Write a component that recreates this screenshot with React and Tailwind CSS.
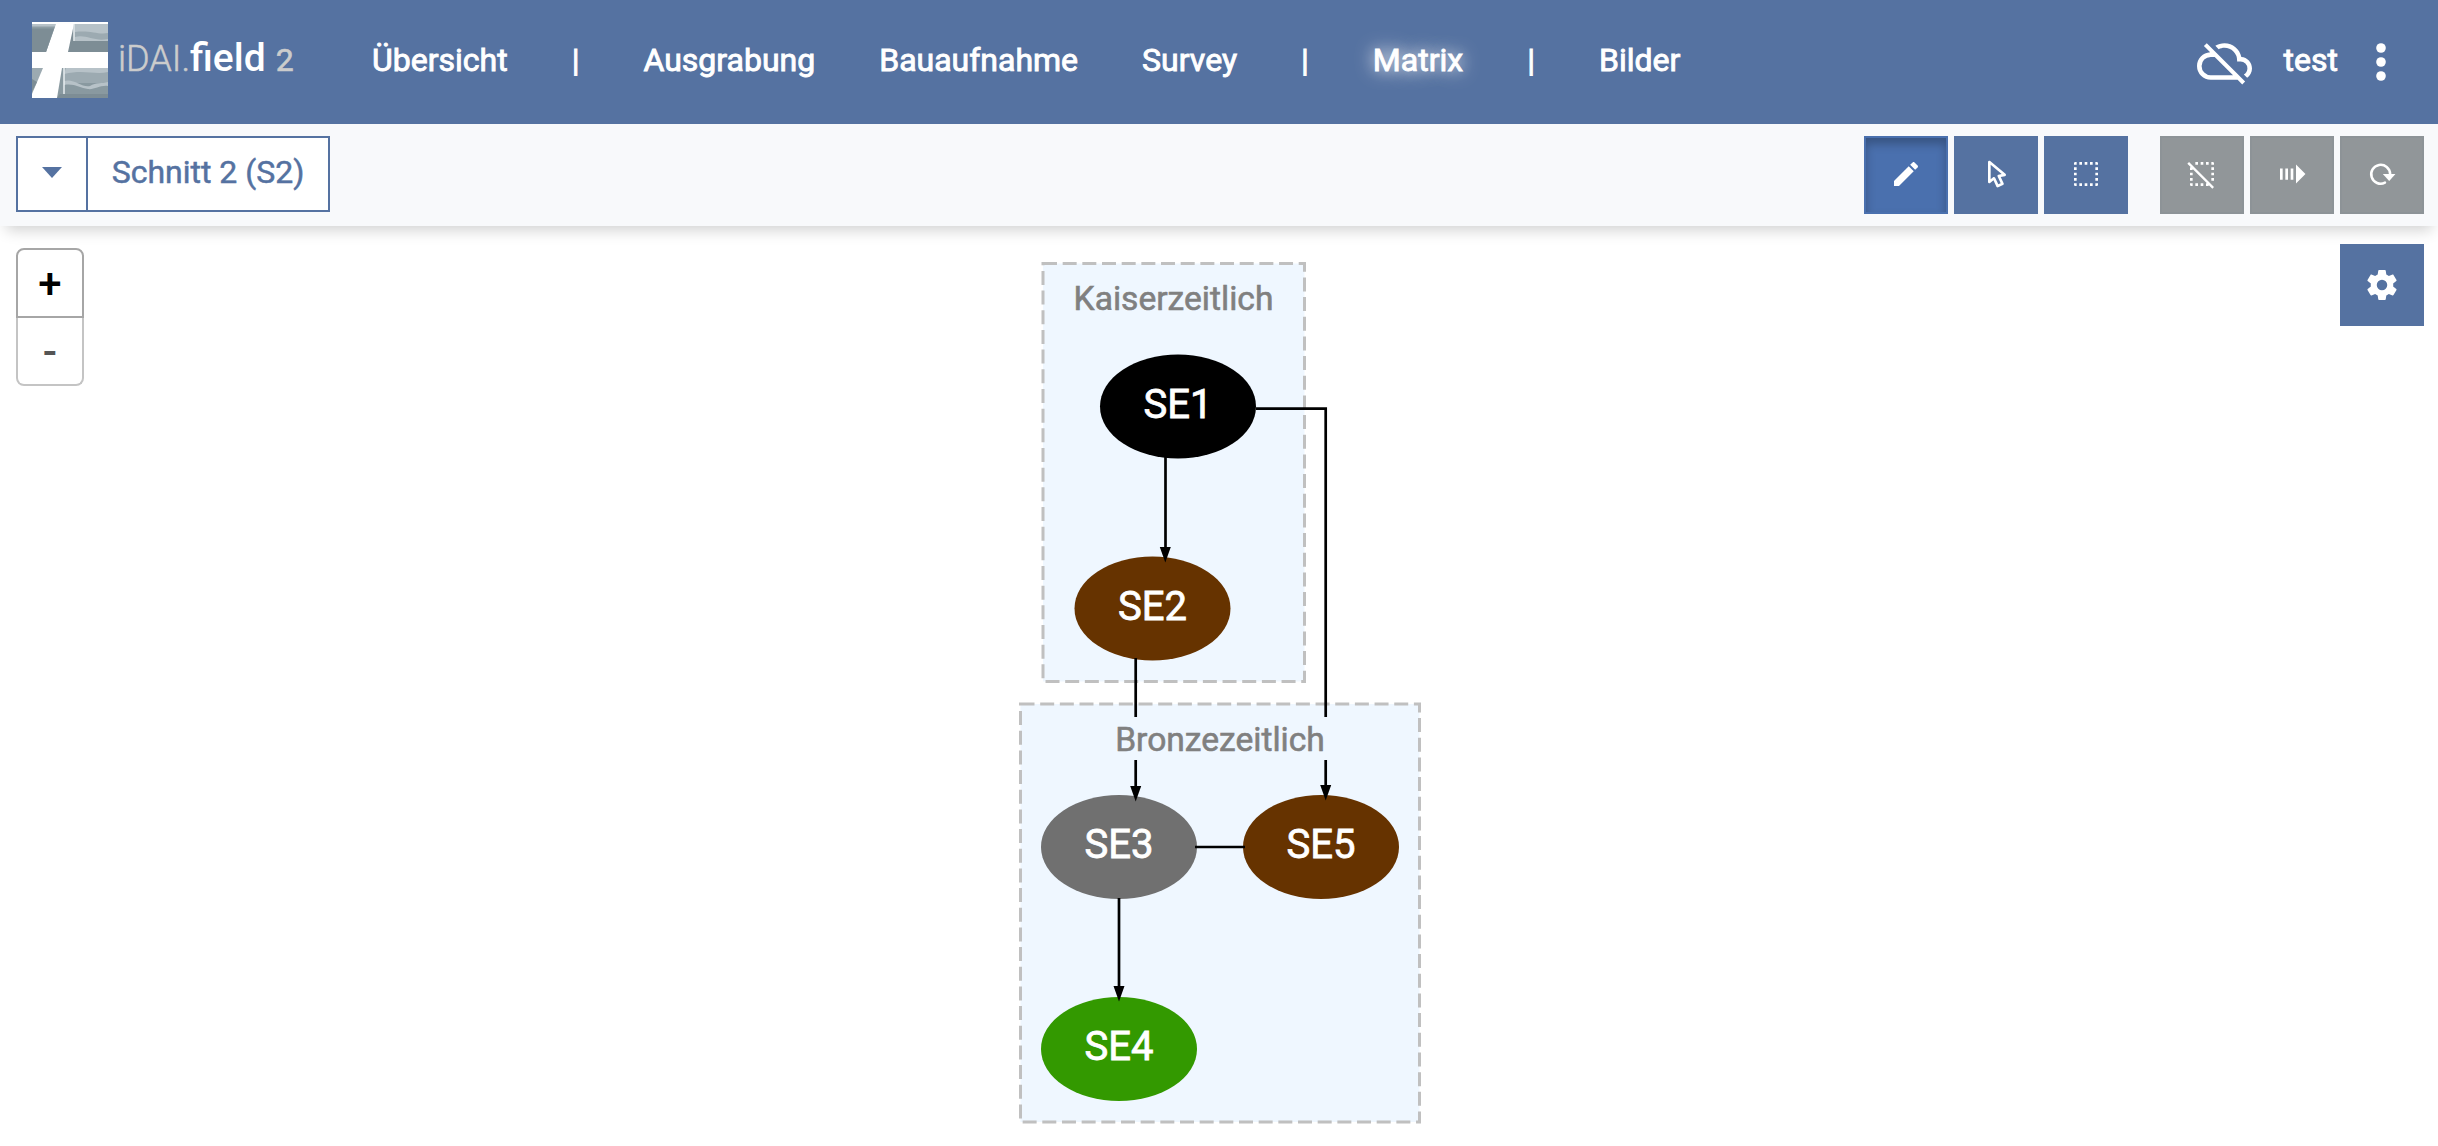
const ICONS = {
  pencil:
    'M20.71,7.04C21.1,6.65 21.1,6 20.71,5.63L18.37,3.29C18,2.9 17.35,2.9 16.96,3.29L15.12,5.12L18.87,8.87M3,17.25V21H6.75L17.81,9.93L14.06,6.18L3,17.25Z',
  cursor:
    'M10.07,14.27C10.57,14.03 11.16,14.25 11.4,14.75L13.7,19.74L15.5,18.89L13.19,13.91C12.95,13.41 13.17,12.81 13.67,12.58L13.95,12.5L16.25,12.05L8,5.12V15.9L9.82,14.43L10.07,14.27M13.64,21.97C13.14,22.21 12.54,22 12.31,21.5L10.13,16.76L7.62,18.78C7.45,18.92 7.24,19 7,19A1,1 0 0,1 6,18V3A1,1 0 0,1 7,2C7.24,2 7.47,2.09 7.64,2.23L7.65,2.22L19.14,11.86C19.57,12.22 19.62,12.85 19.27,13.27C19.12,13.45 18.91,13.57 18.7,13.61L15.54,14.23L17.74,18.96C18,19.46 17.76,20.05 17.26,20.28L13.64,21.97Z',
  select:
    'M4,3H5V5H3V4A1,1 0 0,1 4,3M20,3A1,1 0 0,1 21,4V5H19V3H20M15,5V3H17V5H15M11,5V3H13V5H11M7,5V3H9V5H7M21,20A1,1 0 0,1 20,21H19V19H21V20M15,21V19H17V21H15M11,21V19H13V21H11M7,21V19H9V21H7M4,21A1,1 0 0,1 3,20V19H5V21H4M3,15H5V17H3V15M21,15V17H19V15H21M3,11H5V13H3V11M21,11V13H19V11H21M3,7H5V9H3V7M21,7V9H19V7H21Z',
  selectOff:
    'M1,4.27L2.28,3L21,21.72L19.73,23L17,20.27V21H15V19H15.73L5,8.27V9H3V7H3.73L1,4.27M20,3A1,1 0 0,1 21,4V5H19V3H20M15,5V3H17V5H15M11,5V3H13V5H11M7,5V3H9V5H7M11,21V19H13V21H11M7,21V19H9V21H7M4,21A1,1 0 0,1 3,20V19H5V21H4M3,15H5V17H3V15M21,15V17H19V15H21M3,11H5V13H3V11M21,11V13H19V11H21M21,7V9H19V7H21Z',
  forward: 'M3,16.3V7.9H5V16.3H3M7,16.3V7.9H9V16.3H7M11,16.3V7.9H13V16.3H11M15,19.2V4.8L22.1,12L15,19.2Z',
  cloudOff:
    'M19.35,10.04C18.67,6.59 15.64,4 12,4C10.5,4 9.15,4.43 8,5.17L9.46,6.63C10.21,6.23 11.08,6 12,6A5.5,5.5 0 0,1 17.5,11.5V12H19A3,3 0 0,1 22,15C22,16.13 21.36,17.11 20.44,17.62L21.89,19.07C23.16,18.16 24,16.68 24,15C24,12.36 21.95,10.22 19.35,10.04M3,5.27L5.75,8C2.56,8.15 0,10.77 0,14A6,6 0 0,0 6,20H17.73L19.73,22L21,20.73L4.27,4M7.73,10L15.73,18H6A4,4 0 0,1 2,14A4,4 0 0,1 6,10H7.73Z',
  cog: 'M12,15.5A3.5,3.5 0 0,1 8.5,12A3.5,3.5 0 0,1 12,8.5A3.5,3.5 0 0,1 15.5,12A3.5,3.5 0 0,1 12,15.5M19.43,12.97C19.47,12.65 19.5,12.33 19.5,12C19.5,11.67 19.47,11.34 19.43,11L21.54,9.37C21.73,9.22 21.78,8.95 21.66,8.73L19.66,5.27C19.54,5.05 19.27,4.96 19.05,5.05L16.56,6.05C16.04,5.66 15.5,5.32 14.87,5.07L14.5,2.42C14.46,2.18 14.25,2 14,2H10C9.75,2 9.54,2.18 9.5,2.42L9.13,5.07C8.5,5.32 7.96,5.66 7.44,6.05L4.95,5.05C4.73,4.96 4.46,5.05 4.34,5.27L2.34,8.73C2.21,8.95 2.27,9.22 2.46,9.37L4.57,11C4.53,11.34 4.5,11.67 4.5,12C4.5,12.33 4.53,12.65 4.57,12.97L2.46,14.63C2.27,14.78 2.21,15.05 2.34,15.27L4.34,18.73C4.46,18.95 4.73,19.03 4.95,18.95L7.44,17.94C7.96,18.34 8.5,18.68 9.13,18.93L9.5,21.58C9.54,21.82 9.75,22 10,22H14C14.25,22 14.46,21.82 14.5,21.58L14.87,18.93C15.5,18.67 16.04,18.34 16.56,17.94L19.05,18.95C19.27,19.03 19.54,18.95 19.66,18.73L21.66,15.27C21.78,15.05 21.73,14.78 21.54,14.63L19.43,12.97Z',
}

function Icon({ name, className }) {
  if (name === 'reload') {
    return (
      <svg viewBox="0 0 24 24" fill="currentColor" className={className}>
        <path
          d="M18.1,12A7.1,7.1 0 1,0 14.2,18.5"
          fill="none"
          stroke="currentColor"
          strokeWidth="1.9"
          strokeLinecap="round"
        />
        <path d="M12.6,12H22.1L17.4,17.3Z" />
      </svg>
    )
  }
  return (
    <svg viewBox="0 0 24 24" fill="currentColor" className={className}>
      <path d={ICONS[name]} />
    </svg>
  )
}

function Logo() {
  return (
    <svg viewBox="0 0 76 76" className="-mt-1 size-[76px] shrink-0">
      <rect width="76" height="76" fill="#fff" />
      <path d="M0,2H24L14,30H0Z" fill="#b7c2c8" />
      <path d="M0,4.5H23L14,30H0Z" fill="#8d9ca3" />
      <path d="M0,6.5H22L14,30H0Z" fill="#7d8d95" />
      <path d="M42,2H76V30H36Z" fill="#7d8d95" />
      <path d="M42,2H76V19H42Z" fill="#9caab1" />
      <path d="M43,2H76V11C66,13 58,8 43,10Z" fill="#b7c2c8" />
      <path d="M43,15C54,12 62,20 76,17V19H43Z" fill="#b7c2c8" />
      <path d="M42,2V19" stroke="#e9eef0" strokeWidth="1.5" />
      <path d="M0,46H11L0,72Z" fill="#9caab1" />
      <path d="M0,57L5,60L0,70Z" fill="#7d8d95" />
      <path d="M30,46H76V76H25Z" fill="#8999a0" />
      <path d="M32,46H76V61H32Z" fill="#9caab1" />
      <path d="M34,46H76V50C62,53 52,47 32,52Z" fill="#b7c2c8" />
      <path d="M32,59C42,56 50,66 58,64C64,60 70,62 76,60V64C68,63 62,68 56,67C48,66 42,61 32,63Z" fill="#b7c2c8" />
      <path d="M28,72H76V76H25Z" fill="#7d8d95" />
      <path d="M32,46V72" stroke="#e9eef0" strokeWidth="1.5" />
    </svg>
  )
}

function NavItem({ children, className = '' }) {
  return <a className={`block px-8 ${className}`}>{children}</a>
}

function Header() {
  return (
    <header className="relative z-10 flex h-[124px] shrink-0 items-center bg-[#5572a1] text-[32px] leading-[48px] text-white">
      <div className="flex w-[340px] shrink-0 items-center pl-8">
        <Logo />
        <div className="-mt-[6px] ml-[10px] flex items-baseline whitespace-nowrap text-[#ccc]">
          <span className="text-[36px] font-light [-webkit-text-stroke:0.5px_#ccc]">iDAI.</span>
          <span className="text-[39px] font-medium text-white">field</span>
          <span className="ml-[10px] text-[32px] [-webkit-text-stroke:0.6px_#ccc]">2</span>
        </div>
      </div>
      <nav className="-mt-[4px] flex items-center [-webkit-text-stroke:0.9px_#fff]">
        <NavItem>Übersicht</NavItem>
        <NavItem>|</NavItem>
        <NavItem>Ausgrabung</NavItem>
        <NavItem>Bauaufnahme</NavItem>
        <NavItem>Survey</NavItem>
        <NavItem>|</NavItem>
        <NavItem className="[text-shadow:0_0_20px_#fff,0_0_14px_rgba(255,255,255,0.4)]">Matrix</NavItem>
        <NavItem>|</NavItem>
        <NavItem>Bilder</NavItem>
      </nav>
      <div className="mr-[52px] ml-auto flex items-center">
        <Icon name="cloudOff" className="-mt-[2px] size-[55px]" />
        <span className="-mt-[4px] ml-8 [-webkit-text-stroke:0.9px_#fff]">test</span>
        <svg viewBox="0 0 10 38" fill="currentColor" className="-mt-[1px] ml-[38px] h-[38px] w-[10px]">
          <circle cx="5" cy="5" r="4.8" />
          <circle cx="5" cy="19" r="4.8" />
          <circle cx="5" cy="33" r="4.8" />
        </svg>
      </div>
    </header>
  )
}

function ToolButton({ icon, active, disabled }) {
  const tone = active
    ? 'border-[#4a70ae] bg-[#4a70ae] shadow-[inset_0_6px_10px_rgba(0,0,0,0.25)]'
    : disabled
      ? 'border-[#8d9397] bg-[#919699]'
      : 'border-[#5572a1] bg-[#5572a1]'
  return (
    <button className={`flex h-[78px] w-[84px] items-center justify-center border-2 pb-[2px] text-white ${tone}`}>
      <Icon name={icon} className="size-8" />
    </button>
  )
}

function Toolbar() {
  return (
    <div className="relative flex h-[102px] shrink-0 items-start justify-between bg-[#f8f9fb] px-4 pt-3 pr-[14px] shadow-[0_10px_14px_-6px_rgba(0,0,0,0.19)]">
      <div className="flex h-[76px] w-[314px] border-2 border-[#5572a1] bg-white text-[32px] whitespace-nowrap text-[#5572a1] [-webkit-text-stroke:0.5px_#5572a1]">
        <div className="flex w-[68px] shrink-0 items-center justify-center pb-[4px]">
          <svg viewBox="0 0 20 11" fill="currentColor" className="h-[11px] w-5">
            <path d="M0,0H20L10,11Z" />
          </svg>
        </div>
        <div className="flex flex-1 items-center justify-center border-l-2 border-[#5572a1] pb-[4px]">Schnitt 2 (S2)</div>
      </div>
      <div className="flex gap-[6px]">
        <ToolButton icon="pencil" active />
        <ToolButton icon="cursor" />
        <ToolButton icon="select" />
        <div className="w-5" />
        <ToolButton icon="selectOff" disabled />
        <ToolButton icon="forward" disabled />
        <ToolButton icon="reload" disabled />
      </div>
    </div>
  )
}

const GROUPS = [
  { label: 'Kaiserzeitlich', x: 1043, y: 263.5, w: 261.5, h: 418, tx: 1173.5, ty: 310 },
  { label: 'Bronzezeitlich', x: 1020.5, y: 704, w: 399, h: 418, tx: 1220, ty: 751 },
]

const NODES = [
  { label: 'SE1', cx: 1178, cy: 406.5, fill: '#000000' },
  { label: 'SE2', cx: 1152.5, cy: 608.5, fill: '#663300' },
  { label: 'SE3', cx: 1119, cy: 847, fill: '#707070' },
  { label: 'SE5', cx: 1321, cy: 847, fill: '#663300' },
  { label: 'SE4', cx: 1119, cy: 1049, fill: '#339900' },
]

const EDGES = [
  'M1165.5,457V548',
  'M1256,408.7H1325.7V717M1325.7,760V786',
  'M1135.7,658V717M1135.7,760V786',
  'M1195,847H1245',
  'M1119,898V988',
]

const ARROWS = [
  [1165.3, 562],
  [1325.7, 800],
  [1135.7, 801],
  [1119, 1001],
]

function Matrix() {
  return (
    <svg viewBox="0 226 2438 920" className="absolute inset-0 h-full w-full">
      {GROUPS.map((g) => (
        <rect
          key={g.label}
          x={g.x}
          y={g.y}
          width={g.w}
          height={g.h}
          fill="#eff7ff"
          stroke="#c0c0c0"
          strokeWidth="3"
          strokeDasharray="14 5.67"
        />
      ))}
      {NODES.map((n) => (
        <ellipse key={n.label} cx={n.cx} cy={n.cy} rx="78" ry="52" fill={n.fill} />
      ))}
      {EDGES.map((d) => (
        <path key={d} d={d} fill="none" stroke="#000" strokeWidth="2.7" />
      ))}
      {ARROWS.map(([x, y]) => (
        <path key={`${x}-${y}`} d={`M${x - 5.5},${y - 15}h11l-5.5,15.5Z`} />
      ))}
      {GROUPS.map((g) => (
        <text
          key={g.label}
          x={g.tx}
          y={g.ty}
          textAnchor="middle"
          fill="#808080"
          stroke="#808080"
          strokeWidth="0.6"
          className="text-[33.6px]"
        >
          {g.label}
        </text>
      ))}
      {NODES.map((n) => (
        <text
          key={n.label}
          x={n.cx}
          y={n.cy + 11.4}
          textAnchor="middle"
          fill="#fff"
          stroke="#fff"
          strokeWidth="0.8"
          className="text-[40px]"
        >
          {n.label}
        </text>
      ))}
    </svg>
  )
}

export default function App() {
  return (
    <div className="flex h-screen w-full flex-col overflow-hidden bg-white font-[Roboto,sans-serif]">
      <Header />
      <Toolbar />
      <main className="relative flex flex-1 items-start justify-between">
        <Matrix />
        <div className="mt-[22px] ml-4 flex w-[68px] flex-col text-[42px] leading-none font-medium">
          <button className="flex h-[70px] items-center justify-center rounded-t-lg border-2 border-[#a6a6a6] pt-[2px] text-black">+</button>
          <button className="flex h-[68px] items-center justify-center rounded-b-lg border-2 border-t-0 border-[#c4c4c4] pt-[2px] text-[#555]">-</button>
        </div>
        <button className="mt-[18px] mr-[14px] flex h-[82px] w-[84px] items-center justify-center bg-[#5572a1] text-white">
          <Icon name="cog" className="size-9" />
        </button>
      </main>
    </div>
  )
}
